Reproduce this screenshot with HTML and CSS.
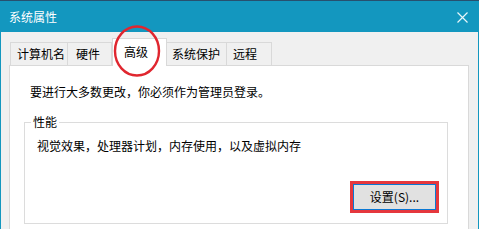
FILE: index.html
```html
<!DOCTYPE html>
<html lang="zh-CN">
<head>
<meta charset="utf-8">
<title>系统属性</title>
<link rel="stylesheet" href="styles.css">
</head>
<body>
<div class="window">
  <div class="titlebar">
    <span class="title">系统属性</span>
    <svg class="close" width="11" height="11" viewBox="0 0 11 11"><path d="M0.5 0.5 L10.5 10.5 M10.5 0.5 L0.5 10.5" stroke="#e8f6fa" stroke-width="1.2" fill="none"/></svg>
  </div>
  <div class="body">
    <div class="tabs">
      <div class="tab t1">计算机名</div>
      <div class="tab t2">硬件</div>
      <div class="tab t3 active">高级</div>
      <div class="tab t4">系统保护</div>
      <div class="tab t5">远程</div>
    </div>
    <div class="panel">
      <p class="line1">要进行大多数更改，你必须作为管理员登录。</p>
      <fieldset class="group">
        <legend>性能</legend>
        <p class="desc">视觉效果，处理器计划，内存使用，以及虚拟内存</p>
        <div class="actions">
          <div class="highlight"><button class="btn">设置(S)...</button></div>
        </div>
      </fieldset>
    </div>
  </div>
  <svg class="circle" width="52" height="56" viewBox="0 0 52 56"><ellipse cx="24" cy="26" rx="22" ry="24.5" fill="none" stroke="#e0262f" stroke-width="2.4"/></svg>
</div>
</body>
</html>
```
FILE: styles.css
```css
* { box-sizing: border-box; }
html, body { margin: 0; padding: 0; }
body {
  font-family: "Noto Sans CJK SC", "Noto Sans", sans-serif;
  font-size: 12px;
  line-height: 16px;
  color: #000;
  background: #f0f0f0;
}
.window {
  position: relative;
  width: 479px;
  height: 229px;
  overflow: hidden;
  display: flex;
  flex-direction: column;
}
.titlebar {
  height: 32px;
  flex: none;
  background: #1397bf;
  border-top: 1px solid #27506e;
  display: flex;
  align-items: center;
  justify-content: space-between;
  padding: 0 11px 0 9px;
  color: #fff;
}
.title { font-size: 12px; line-height: 16px; }
.close { display: block; margin-top: 1px; }
.body {
  flex: 1;
  background: #f0f0f0;
  border-left: 1px solid #1397bf;
  border-right: 1px solid #1397bf;
  padding-top: 6px;
}
.tabs {
  display: flex;
  align-items: flex-end;
  margin-left: 9px;
  height: 27px;
}
.tab {
  height: 23px;
  border: 1px solid #d9d9d9;
  border-bottom: none;
  background: #f0f0f0;
  padding: 3px 0 0 6px;
  white-space: nowrap;
}
.tab + .tab { border-left: none; }
.t1 { width: 58px; }
.t2 { width: 44px; padding-left: 8px; }
.t3 { width: 55px; }
.t4 { width: 60px; padding-left: 5px; }
.t5 { width: 45px; }
.tab.active {
  height: 28px;
  margin-bottom: -1px;
  background: #fff;
  border-left: 1px solid #d9d9d9;
  position: relative;
  z-index: 1;
  padding: 5px 0 0 11px;
}
.tab.active + .tab { border-left: none; }
.panel {
  margin-left: 8px;
  width: 460px;
  height: 180px;
  background: #fff;
  border: 1px solid #d9d9d9;
  padding: 18px 0 0 14px;
}
.line1 { margin: 0 0 0 6px; }
.group {
  margin: 14px 0 0 0;
  width: 424px;
  border: 1px solid #dcdcdc;
  padding: 0 0 10px 0;
  min-width: 0;
}
.group legend {
  margin-left: 6px;
  padding: 0 2px;
}
.desc { margin: 8px 0 0 12px; }
.actions {
  display: flex;
  justify-content: flex-end;
  margin-top: 27px;
  padding-right: 8px;
}
.highlight {
  width: 89px;
  height: 32px;
  border: 3px solid #e5373d;
}
.btn {
  display: block;
  width: 83px;
  height: 26px;
  margin: 0;
  border: 1px solid #0a78d4;
  background: #e1e1e1;
  font-family: "Noto Sans CJK SC", "Noto Sans", sans-serif;
  font-size: 12px;
  line-height: 16px;
  color: #000;
  padding: 0;
}
.circle {
  position: absolute;
  left: 113px;
  top: 25px;
  z-index: 2;
}
```
